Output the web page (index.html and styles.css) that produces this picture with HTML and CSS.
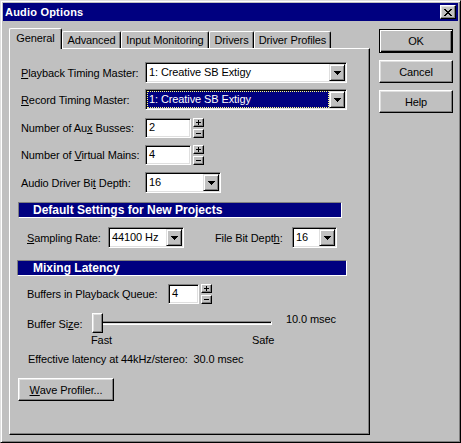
FILE: index.html
```html
<!DOCTYPE html>
<html>
<head>
<meta charset="utf-8">
<link rel="stylesheet" href="styles.css">
</head>
<body>
<div class="window">
  <div class="titlebar">
    <span class="title">Audio Options</span>
    <span class="close">
      <svg width="8" height="7" viewBox="0 0 8 7" shape-rendering="crispEdges">
        <path d="M0 0h2v1H0zM6 0h2v1H6zM1 1h2v1H1zM5 1h2v1H5zM2 2h4v1H2zM3 3h2v1H3zM2 4h4v1H2zM1 5h2v1H1zM5 5h2v1H5zM0 6h2v1H0zM6 6h2v1H6z" fill="#000"/>
      </svg>
    </span>
  </div>
  <div class="body">
    <div class="sheet">
      <div class="tabs">
        <div class="tab selected tab-general">General</div>
        <div class="tab tab-advanced">Advanced</div>
        <div class="tab tab-input">Input Monitoring</div>
        <div class="tab tab-drivers">Drivers</div>
        <div class="tab tab-profiles">Driver Profiles</div>
      </div>
      <div class="panel">
        <div class="row r-playback">
          <span class="label lbl-main"><u>P</u>layback Timing Master:</span>
          <div class="combo combo-master">
            <span class="value">1: Creative SB Extigy</span>
            <span class="arrow"><svg width="7" height="4" viewBox="0 0 7 4" shape-rendering="crispEdges"><path d="M0 0h7v1H0zM1 1h5v1H1zM2 2h3v1H2zM3 3h1v1H3z" fill="#000"/></svg></span>
          </div>
        </div>
        <div class="row r-record">
          <span class="label lbl-main"><u>R</u>ecord Timing Master:</span>
          <div class="combo combo-master">
            <span class="value focused">1: Creative SB Extigy</span>
            <span class="arrow"><svg width="7" height="4" viewBox="0 0 7 4" shape-rendering="crispEdges"><path d="M0 0h7v1H0zM1 1h5v1H1zM2 2h3v1H2zM3 3h1v1H3z" fill="#000"/></svg></span>
          </div>
        </div>
        <div class="row r-aux">
          <span class="label lbl-main">Number of Au<u>x</u> Busses:</span>
          <div class="field field-num">2</div>
          <div class="spin">
            <span class="spin-btn"><svg width="5" height="5" viewBox="0 0 5 5" shape-rendering="crispEdges"><path d="M2 0h1v5H2zM0 2h5v1H0z" fill="#000"/></svg></span>
            <span class="spin-btn"><svg width="5" height="1" viewBox="0 0 5 1" shape-rendering="crispEdges"><path d="M0 0h5v1H0z" fill="#000"/></svg></span>
          </div>
        </div>
        <div class="row r-mains">
          <span class="label lbl-main">Number of <u>V</u>irtual Mains:</span>
          <div class="field field-num">4</div>
          <div class="spin">
            <span class="spin-btn"><svg width="5" height="5" viewBox="0 0 5 5" shape-rendering="crispEdges"><path d="M2 0h1v5H2zM0 2h5v1H0z" fill="#000"/></svg></span>
            <span class="spin-btn"><svg width="5" height="1" viewBox="0 0 5 1" shape-rendering="crispEdges"><path d="M0 0h5v1H0z" fill="#000"/></svg></span>
          </div>
        </div>
        <div class="row r-depth">
          <span class="label lbl-main">Audio Driver Bi<u>t</u> Depth:</span>
          <div class="combo combo-depth">
            <span class="value">16</span>
            <span class="arrow"><svg width="7" height="4" viewBox="0 0 7 4" shape-rendering="crispEdges"><path d="M0 0h7v1H0zM1 1h5v1H1zM2 2h3v1H2zM3 3h1v1H3z" fill="#000"/></svg></span>
          </div>
        </div>
        <div class="section section-defaults">Default Settings for New Projects</div>
        <div class="row r-sampling">
          <span class="label lbl-rate"><u>S</u>ampling Rate:</span>
          <div class="combo combo-rate">
            <span class="value">44100 Hz</span>
            <span class="arrow"><svg width="7" height="4" viewBox="0 0 7 4" shape-rendering="crispEdges"><path d="M0 0h7v1H0zM1 1h5v1H1zM2 2h3v1H2zM3 3h1v1H3z" fill="#000"/></svg></span>
          </div>
          <span class="label lbl-filedepth">File Bit Dept<u>h</u>:</span>
          <div class="combo combo-filedepth">
            <span class="value">16</span>
            <span class="arrow"><svg width="7" height="4" viewBox="0 0 7 4" shape-rendering="crispEdges"><path d="M0 0h7v1H0zM1 1h5v1H1zM2 2h3v1H2zM3 3h1v1H3z" fill="#000"/></svg></span>
          </div>
        </div>
        <div class="section section-latency">Mixing Latency</div>
        <div class="row r-buffers">
          <span class="label lbl-buffers">Buffers in Playback Queue:</span>
          <div class="field field-buffers">4</div>
          <div class="spin">
            <span class="spin-btn"><svg width="5" height="5" viewBox="0 0 5 5" shape-rendering="crispEdges"><path d="M2 0h1v5H2zM0 2h5v1H0z" fill="#000"/></svg></span>
            <span class="spin-btn"><svg width="5" height="1" viewBox="0 0 5 1" shape-rendering="crispEdges"><path d="M0 0h5v1H0z" fill="#000"/></svg></span>
          </div>
        </div>
        <div class="row r-slider">
          <span class="label lbl-size">Buffer Si<u>z</u>e:</span>
          <div class="slider">
            <div class="track"></div>
            <div class="thumb"></div>
          </div>
          <span class="slider-value">10.0 msec</span>
        </div>
        <div class="ticks">
          <span class="tick-fast">Fast</span>
          <span>Safe</span>
        </div>
        <div class="effective">Effective latency at 44kHz/stereo:&nbsp; 30.0 msec</div>
        <div class="btn btn-wave"><u>W</u>ave Profiler...</div>
      </div>
    </div>
    <div class="buttons">
      <div class="btn btn-default">OK</div>
      <div class="btn btn-cancel">Cancel</div>
      <div class="btn btn-help">Help</div>
    </div>
  </div>
</div>
</body>
</html>
```

FILE: styles.css
```css
html, body {
  margin: 0;
  padding: 0;
  background: #c0c0c0;
}
body {
  font-family: "Liberation Sans", Arial, sans-serif;
  font-size: 11px;
  letter-spacing: -0.1px;
  color: #000;
}
u { text-decoration: underline; text-underline-offset: 1px; }

.window {
  box-sizing: border-box;
  width: 461px;
  height: 443px;
  background: #c0c0c0;
  border: 1px solid;
  border-color: #dfdfdf #000 #000 #dfdfdf;
  box-shadow: inset 1px 1px #fff, inset -1px -1px #808080;
  padding: 2px;
}

.titlebar {
  height: 18px;
  background: #000080;
  display: flex;
  align-items: center;
  justify-content: space-between;
  padding-left: 2px;
}
.title {
  color: #fff;
  font-weight: bold;
  letter-spacing: 0.2px;
}
.close {
  box-sizing: border-box;
  width: 16px;
  height: 14px;
  margin-right: 2px;
  background: #c0c0c0;
  border: 1px solid;
  border-color: #fff #000 #000 #fff;
  box-shadow: inset -1px -1px #808080, inset 1px 1px #dfdfdf;
  display: flex;
  align-items: center;
  justify-content: center;
}
.close svg { display: block; }

.body {
  display: flex;
  padding-top: 7px;
}
.sheet {
  margin-left: 6px;
  width: 361px;
}
.tabs {
  height: 20px;
  display: flex;
  align-items: flex-end;
}
.tab {
  box-sizing: border-box;
  height: 17px;
  border: 1px solid;
  border-bottom: none;
  border-color: #fff #000 #000 #fff;
  border-radius: 2px 2px 0 0;
  box-shadow: inset -1px 0 #808080;
  display: flex;
  align-items: center;
  justify-content: center;
  white-space: nowrap;
  background: #c0c0c0;
}
.tab.selected {
  position: relative;
  z-index: 1;
  height: 21px;
  margin-bottom: -1px;
  padding-bottom: 3px;
}
.tab-general { width: 53px; }
.tab-advanced { width: 59px; }
.tab-input { width: 88px; }
.tab-drivers { width: 45px; }
.tab-profiles { width: 77px; }

.panel {
  box-sizing: border-box;
  height: 387px;
  border: 1px solid;
  border-color: #fff #000 #000 #fff;
  box-shadow: inset -1px -1px #808080;
  overflow: hidden;
}

.row {
  display: flex;
  align-items: center;
}
.label { white-space: nowrap; }

.r-playback { margin-top: 13px; margin-left: 11px; }
.r-record { margin-top: 6px; margin-left: 11px; }
.r-aux { margin-top: 8px; margin-left: 11px; }
.r-mains { margin-top: 7px; margin-left: 11px; }
.r-depth { margin-top: 7px; margin-left: 11px; }
.lbl-main { width: 124px; }

.section {
  box-sizing: border-box;
  height: 16px;
  background: #000080;
  color: #fff;
  font-weight: bold;
  font-size: 12px;
  line-height: 14px;
  border: 1px solid;
  border-color: #808080 #fff #fff #808080;
  letter-spacing: 0;
  white-space: nowrap;
}
.section-defaults { margin-top: 9px; margin-left: 8px; width: 324px; padding-left: 14px; }
.section-latency { margin-top: 12px; margin-left: 7px; width: 330px; padding-left: 15px; }

.r-sampling { margin-top: 9px; margin-left: 17px; }
.lbl-rate { width: 81px; }
.lbl-filedepth { width: 77px; margin-left: 31px; }

.r-buffers { margin-top: 8px; margin-left: 17px; }
.lbl-buffers { width: 141px; }

.combo {
  box-sizing: border-box;
  height: 21px;
  display: flex;
  padding: 1px;
  background: #fff;
  border: 1px solid;
  border-color: #808080 #fff #fff #808080;
  box-shadow: inset 1px 1px #000, inset -1px -1px #dfdfdf;
}
.combo-master { width: 202px; }
.combo-depth { width: 76px; }
.combo-rate { width: 76px; }
.combo-filedepth { width: 45px; }
.value {
  flex: 1;
  box-sizing: border-box;
  height: 17px;
  line-height: 17px;
  padding-left: 2px;
  white-space: nowrap;
  overflow: hidden;
}
.value.focused {
  background: #000080;
  color: #fff;
  border: 1px dotted #ffff80;
  line-height: 15px;
  padding-left: 1px;
}
.arrow {
  box-sizing: border-box;
  width: 16px;
  height: 17px;
  background: #c0c0c0;
  border: 1px solid;
  border-color: #dfdfdf #000 #000 #dfdfdf;
  box-shadow: inset 1px 1px #fff, inset -1px -1px #808080;
  display: flex;
  align-items: center;
  justify-content: center;
}
.arrow svg { display: block; }

.field {
  box-sizing: border-box;
  height: 20px;
  line-height: 16px;
  padding-left: 3px;
  background: #fff;
  border: 1px solid;
  border-color: #808080 #fff #fff #808080;
  box-shadow: inset 1px 1px #000, inset -1px -1px #dfdfdf;
}
.field-num { width: 46px; }
.field-buffers { width: 31px; }

.spin {
  margin-left: 2px;
  width: 11px;
  height: 20px;
  display: flex;
  flex-direction: column;
  justify-content: space-between;
}
.spin-btn {
  box-sizing: border-box;
  height: 9px;
  background: #c0c0c0;
  border: 1px solid;
  border-color: #fff #000 #000 #fff;
  box-shadow: inset -1px -1px #808080;
  display: flex;
  align-items: center;
  justify-content: center;
}
.spin-btn svg { display: block; }

.r-slider { margin-top: 9px; margin-left: 17px; align-items: flex-start; height: 20px; }
.lbl-size { width: 65px; line-height: 20px; margin-top: 1px; }
.slider {
  position: relative;
  width: 180px;
  height: 20px;
}
.track {
  box-sizing: border-box;
  margin-top: 8px;
  height: 4px;
  border: 1px solid;
  border-color: #808080 #fff #fff #808080;
  box-shadow: inset 1px 1px #000, inset -1px -1px #dfdfdf;
}
.thumb {
  position: absolute;
  left: 0;
  top: 0;
  box-sizing: border-box;
  width: 11px;
  height: 20px;
  background: #c0c0c0;
  border: 1px solid;
  border-color: #fff #000 #000 #fff;
  box-shadow: inset -1px -1px #808080, inset 1px 1px #dfdfdf;
}
.slider-value {
  margin-left: 14px;
  line-height: 12px;
}

.ticks {
  margin-top: 1px;
  margin-left: 81px;
  height: 13px;
  line-height: 13px;
  display: flex;
}
.tick-fast { width: 161px; }

.effective {
  margin-top: 6px;
  margin-left: 18px;
  height: 13px;
  line-height: 13px;
  white-space: nowrap;
}

.btn {
  box-sizing: border-box;
  height: 23px;
  background: #c0c0c0;
  border: 1px solid;
  border-color: #fff #000 #000 #fff;
  box-shadow: inset -1px -1px #808080, inset 1px 1px #dfdfdf;
  display: flex;
  align-items: center;
  justify-content: center;
  white-space: nowrap;
}
.btn-wave { margin-top: 12px; margin-left: 8px; width: 96px; }

.buttons {
  margin-left: 9px;
  width: 74px;
  padding-top: 1px;
}
.btn-default {
  height: 24px;
  border: 1px solid #000;
  box-shadow: inset 1px 1px #fff, inset -1px -1px #000, inset -2px -2px #808080;
}
.btn-cancel { margin-top: 7px; }
.btn-help { margin-top: 7px; }
```
